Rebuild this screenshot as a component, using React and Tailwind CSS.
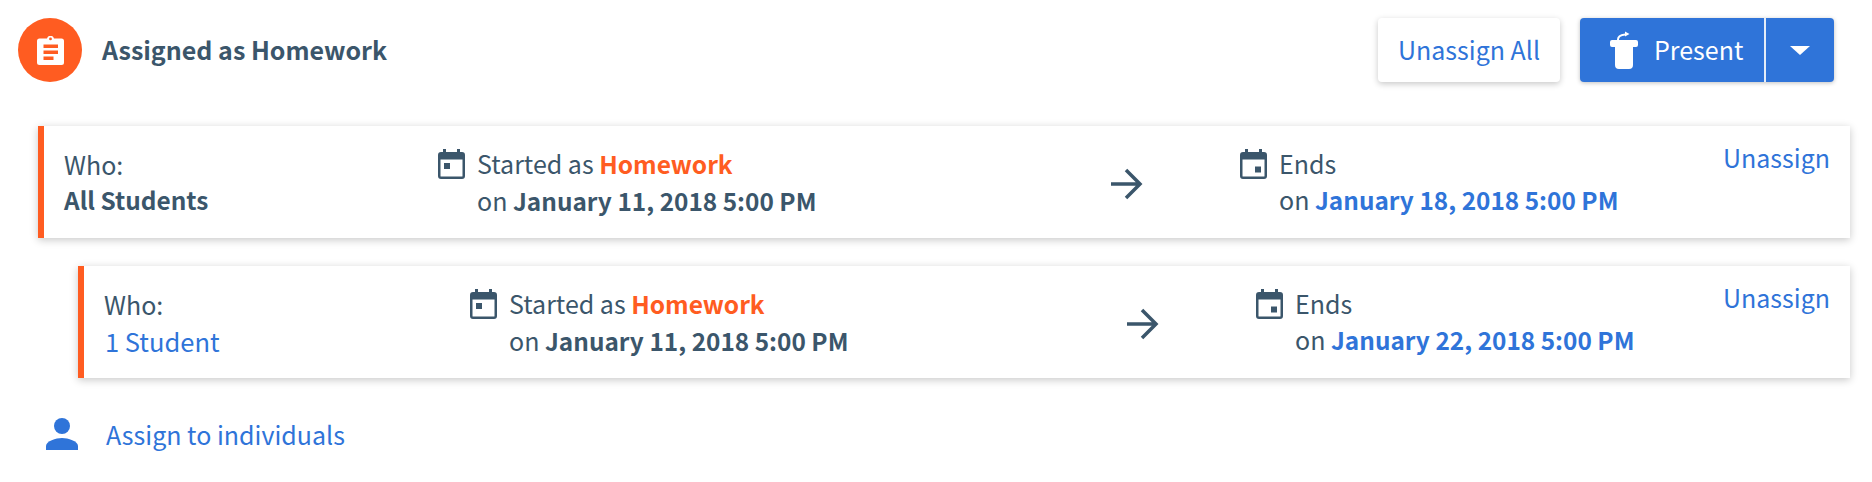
const FONT = "font-['Noto_Sans_CJK_SC','Noto_Sans',sans-serif]";

function AssignmentIcon() {
  return (
    <svg width="27" height="29" viewBox="0 0 27 29">
      <path
        fill="#fff"
        fillRule="evenodd"
        d="M2.500 2.500H10a3.600 3.600 0 0 1 7 0h7.500A2.500 2.500 0 0 1 27 5v21.500a2.500 2.500 0 0 1-2.500 2.500h-22A2.500 2.500 0 0 1 0 26.500V5a2.500 2.500 0 0 1 2.500-2.500zm11-1a1.400 1.400 0 1 0 0 2.800 1.400 1.400 0 0 0 0-2.800z"
      />
      <path fill="#ff5c21" d="M6.500 8.500H21V12H6.500zM6.500 14.500H21V18H6.500zM6.500 20.500H16.500V24H6.500z" />
    </svg>
  );
}

function PodiumIcon() {
  return (
    <svg width="28" height="38" viewBox="0 0 28 38" className="shrink-0">
      <path fill="none" stroke="#fff" strokeWidth="2" d="M8 10V8.500C8 5.500 10 4 15 3.500" />
      <path fill="#fff" d="M15 0.500l4.500 2.500-4.500 2.500z" />
      <path fill="#fff" d="M2 9h24a2 2 0 0 1 2 2v3a2 2 0 0 1-2 2h-3v18a4 4 0 0 1-4 4h-10a4 4 0 0 1-4-4V16H2a2 2 0 0 1-2-2v-3a2 2 0 0 1 2-2z" />
    </svg>
  );
}

function CalendarIcon({ end }) {
  return (
    <svg width="27" height="30" viewBox="0 0 27 30" className="shrink-0">
      <path
        fill="#3b566b"
        fillRule="evenodd"
        d="M5 0h3v3h11V0h3v3h2a3 3 0 0 1 3 3v21a3 3 0 0 1-3 3H3a3 3 0 0 1-3-3V6a3 3 0 0 1 3-3h2zM2.500 10.500V27a.5.5 0 0 0 .5.5h21a.5.5 0 0 0 .5-.5V10.500z"
      />
      {end ? <path fill="#3b566b" d="M15 17.500h6v6h-6z" /> : <path fill="#3b566b" d="M6 14h6v6H6z" />}
    </svg>
  );
}

function ArrowIcon() {
  return (
    <svg width="32" height="32" viewBox="0 0 32 32" className="shrink-0">
      <path fill="none" stroke="#3b566b" strokeWidth="3.500" d="M0 16h29M15 2l14 14-14 14" />
    </svg>
  );
}

function PersonIcon() {
  return (
    <svg width="32" height="32" viewBox="0 0 32 32" className="shrink-0">
      <circle cx="16" cy="8" r="8" fill="#2f74d9" />
      <path fill="#2f74d9" d="M0 32v-4c0-5 10-8 16-8s16 3 16 8v4z" />
    </svg>
  );
}

function AssignCard({ className, whoWidth, startWidth, who, ends }) {
  return (
    <div className={`flex h-[112px] items-start border-l-[6px] border-[#ff5c21] bg-white pr-5 pt-[20px] shadow-[0_2px_8px_rgba(0,0,0,0.22)] ${className}`}>
      <div className={`pl-5 ${whoWidth}`}>
        <div>Who:</div>
        {who}
      </div>
      <div className={`flex ${startWidth}`}>
        <div className="mt-[3px]"><CalendarIcon /></div>
        <div className="-mt-px ml-3">
          <div>Started as <span className="text-[24.5px] font-bold text-[#ff5c21]">Homework</span></div>
          <div>on <span className="text-[24.4px] font-bold">January 11, 2018 5:00 PM</span></div>
        </div>
      </div>
      <div className="w-[129px] pt-[22px]"><ArrowIcon /></div>
      <div className="flex flex-1">
        <div className="mt-[3px]"><CalendarIcon end /></div>
        <div className="-mt-px ml-3">
          <div>Ends</div>
          <div>on <span className="text-[24.4px] font-bold text-[#2f74d9]">{ends}</span></div>
        </div>
      </div>
      <a className="-mt-[7px] text-[#2f74d9]">Unassign</a>
    </div>
  );
}

export default function App() {
  return (
    <div className={`h-[482px] bg-white text-[25px] leading-[36px] text-[#3b566b] ${FONT}`}>
      {/* Header */}
      <div className="flex items-center pl-[18px] pr-[38px] pt-[18px]">
        <div className="flex h-16 w-16 items-center justify-center rounded-full bg-[#ff5c21]">
          <AssignmentIcon />
        </div>
        <h2 className="ml-5 flex-1 pb-0.5 font-semibold">Assigned as Homework</h2>
        <button className="flex h-16 w-[182px] items-center justify-center rounded bg-white pb-0.5 text-[#2f74d9] shadow-[0_2px_6px_rgba(0,0,0,0.22)]">
          Unassign All
        </button>
        <div className="ml-5 flex h-16 w-[254px] rounded bg-[#2f74d9] text-white shadow-[0_1px_4px_rgba(0,0,0,0.25)]">
          <div className="flex w-[184px] items-center pl-[30px]">
            <PodiumIcon />
            <span className="mb-0.5 ml-[16px]">Present</span>
          </div>
          <div className="w-[2px] bg-[#e4ecf8]" />
          <div className="flex flex-1 items-center justify-center">
            <div className="h-0 w-0 border-x-[10px] border-t-[9px] border-x-transparent border-t-white" />
          </div>
        </div>
      </div>

      {/* Assignments */}
      <AssignCard
        className="ml-[38px] mr-[22px] mt-11"
        whoWidth="w-[394px]"
        startWidth="w-[673px]"
        who={<div className="text-[24.4px] font-semibold">All Students</div>}
        ends="January 18, 2018 5:00 PM"
      />
      <AssignCard
        className="ml-[78px] mr-[22px] mt-7"
        whoWidth="w-[386px]"
        startWidth="w-[657px]"
        who={<a className="ml-px mt-px block text-[25.5px] text-[#2f74d9]">1 Student</a>}
        ends="January 22, 2018 5:00 PM"
      />

      {/* Footer */}
      <div className="ml-[46px] mt-10 flex items-start text-[#2f74d9]">
        <PersonIcon />
        <a className="-mt-[2px] ml-7">Assign to individuals</a>
      </div>
    </div>
  );
}
